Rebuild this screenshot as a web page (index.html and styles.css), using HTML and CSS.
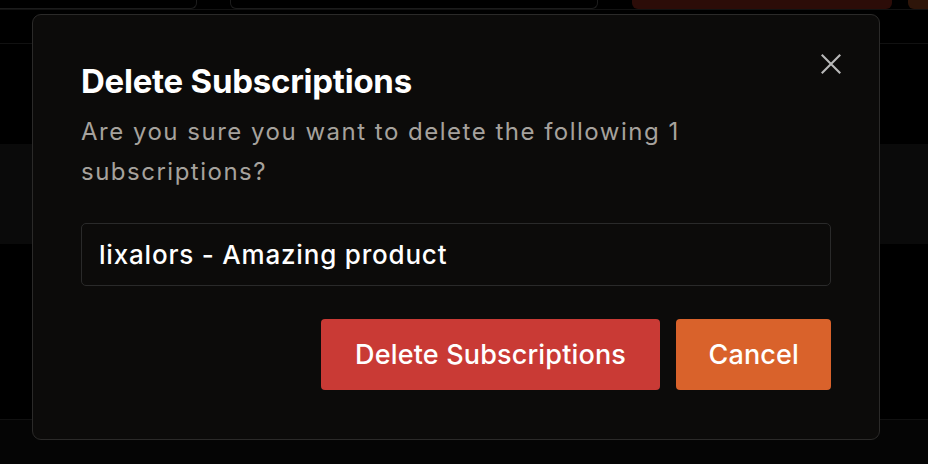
FILE: index.html
```html
<!DOCTYPE html>
<html lang="en">
<head>
<meta charset="utf-8">
<title>Delete Subscriptions</title>
<link rel="stylesheet" href="styles.css">
</head>
<body>
<div class="page">
  <div class="toolbar">
    <div class="tb-box tb-first"></div>
    <div class="tb-box tb-search"></div>
    <div class="tb-btn tb-red"></div>
    <div class="tb-btn tb-orange"></div>
  </div>
  <div class="row row-head"></div>
  <div class="row row-a"></div>
  <div class="row row-band"></div>
  <div class="row row-b"></div>
  <div class="row row-c"></div>
</div>

<div class="modal" role="dialog" aria-labelledby="m-title">
  <button class="close" aria-label="Close">
    <svg width="20" height="20" viewBox="0 0 20 20"><path d="M1.5 1.5 L18.5 18.5 M18.5 1.5 L1.5 18.5" stroke="#b9b9b9" stroke-width="2.1" stroke-linecap="square" fill="none"/></svg>
  </button>
  <h2 class="title" id="m-title">Delete Subscriptions</h2>
  <p class="desc">Are you sure you want to delete the following 1 subscriptions?</p>
  <div class="list">lixalors - Amazing product</div>
  <div class="actions">
    <button class="btn btn-danger">Delete Subscriptions</button>
    <button class="btn btn-cancel">Cancel</button>
  </div>
</div>
</body>
</html>
```
FILE: styles.css
```css
* { box-sizing: border-box; }
html, body { margin: 0; padding: 0; }
body {
  width: 928px;
  height: 464px;
  overflow: hidden;
  background: #000;
  font-family: Inter, "Noto Sans", sans-serif;
  position: relative;
}
.page { display: flex; flex-direction: column; height: 464px; }
.toolbar {
  height: 10px;
  display: flex;
  align-items: flex-start;
  border-bottom: 1px solid #121212;
}
.tb-box, .tb-btn { flex-shrink: 0; }
.tb-box {
  height: 9px;
  border: 1px solid #1c1c1c;
  border-top: none;
  border-radius: 0 0 6px 6px;
  background: #000;
}
.tb-first { width: 207px; margin-left: -10px; }
.tb-search { width: 368px; margin-left: 33px; }
.tb-btn { height: 9px; border-radius: 0 0 6px 6px; }
.tb-red { width: 260px; margin-left: 34px; background: #2c0c08; }
.tb-orange { width: 40px; margin-left: 16px; background: #2e1509; }
.row { flex-shrink: 0; }
.row-head { height: 34px; border-bottom: 1px solid #111; }
.row-a { height: 100px; }
.row-band { height: 100px; background: #0a0a0a; }
.row-b { height: 176px; border-bottom: 1px solid #111; }
.row-c { flex: 1; background: #050505; }

.modal {
  position: absolute;
  left: 32px;
  top: 14px;
  width: 848px;
  height: 426px;
  background: #0c0b0a;
  border: 1px solid #2b2a29;
  border-radius: 9px;
  padding: 46px 48px 48px;
}
.close {
  position: absolute;
  top: 39px;
  right: 38px;
  width: 20px;
  height: 20px;
  padding: 0;
  border: none;
  background: none;
  display: flex;
}
.title {
  margin: 0;
  font-size: 33px;
  line-height: 40px;
  font-weight: 700;
  color: #fff;
  letter-spacing: -0.25px;
}
.desc {
  margin: 11px 0 0;
  font-size: 24px;
  line-height: 39.5px;
  color: #a6a29d;
  letter-spacing: 1.5px;
  max-width: 680px;
}
.list {
  margin-top: 32px;
  height: 63px;
  border: 1px solid #2a2a2a;
  border-radius: 5px;
  padding: 0 17px;
  display: flex;
  align-items: center;
  font-size: 26px;
  font-weight: 500;
  letter-spacing: 0.8px;
  color: #fff;
}
.actions {
  margin-top: 33px;
  display: flex;
  justify-content: flex-end;
  gap: 16px;
}
.btn {
  height: 71px;
  padding: 0 33px;
  border: none;
  border-radius: 4px;
  font-family: inherit;
  font-size: 27px;
  font-weight: 500;
  letter-spacing: 0.15px;
  color: #fff;
}
.btn-danger { background: #c93a35; padding: 0 34.5px; }
.btn-cancel { background: #d9622b; padding: 0 32px; }
```
